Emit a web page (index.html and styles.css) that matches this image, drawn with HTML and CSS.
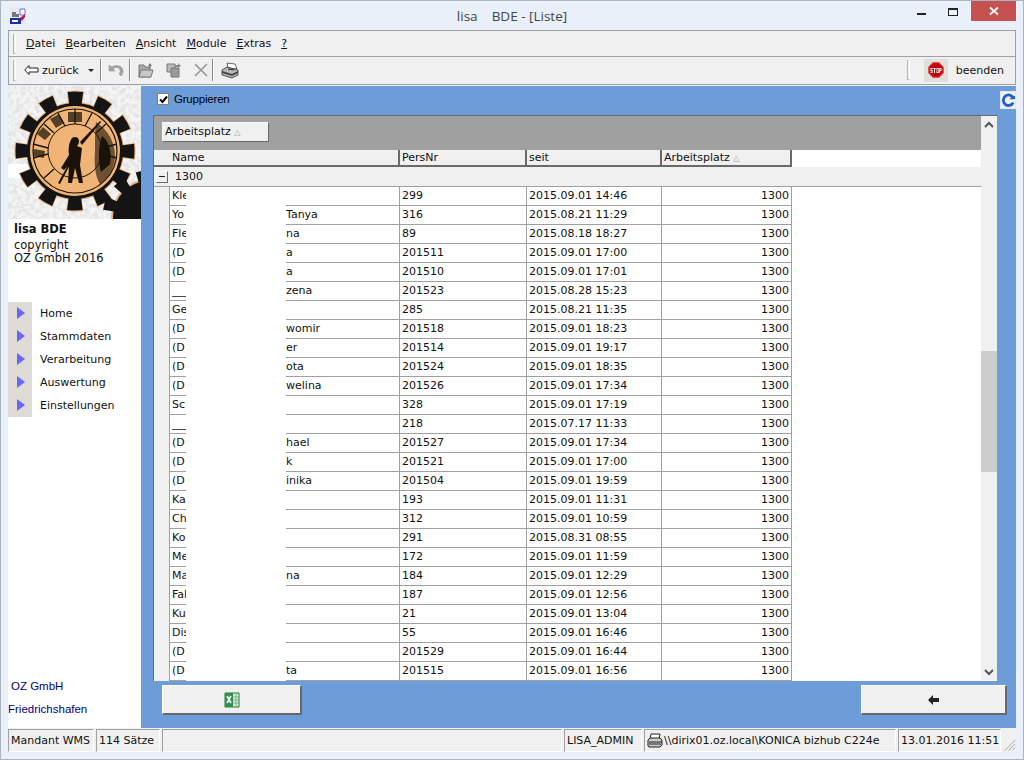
FILE: index.html
```html
<!DOCTYPE html>
<html lang="de">
<head>
<meta charset="utf-8">
<title>lisa BDE - [Liste]</title>
<link rel="stylesheet" href="styles.css">
</head>
<body>
<div class="window">
  <header class="titlebar">
    <svg class="appicon" width="16" height="16" viewBox="0 0 16 16"><rect width="16" height="16" fill="#e8e8f4"/><rect x="0" y="10" width="11" height="6" fill="#1c2f9c"/><path d="M2 4h4v5H2zM6 6h3v3H6z" fill="#777"/><path d="M10 1h5v6h-5z" fill="#f4f4ff" stroke="#3a4fb5" stroke-width=".7"/><path d="M10 10l5-4v3l-3 4z" fill="#b5174a"/><rect x="2" y="12" width="6" height="2" fill="#fff"/></svg>
    <div class="title">lisa    BDE - [Liste]</div>
    <div class="winbtns">
      <span class="min"></span>
      <span class="max"></span>
      <span class="close"><svg width="10" height="10" viewBox="0 0 10 10"><path d="M1 1.5l8 7M9 1.5l-8 7" stroke="#fff" stroke-width="1.8"/></svg></span>
    </div>
  </header>

  <div class="bars">
    <nav class="menubar">
      <span class="grip"></span>
      <span><u>D</u>atei</span><span><u>B</u>earbeiten</span><span><u>A</u>nsicht</span><span><u>M</u>odule</span><span><u>E</u>xtras</span><span><u>?</u></span>
    </nav>
    <div class="toolbar">
      <span class="grip"></span>
      <span class="back">
        <svg width="15" height="10" viewBox="0 0 15 10"><path d="M5 .5v2.5h9v4H5v2.5L.8 5z" fill="#fff" stroke="#222"/></svg>
        zurück
        <svg class="caret" width="6" height="3" viewBox="0 0 6 3"><path d="M0 0h6L3 3z" fill="#222"/></svg>
      </span>
      <span class="sep"></span>
      <svg class="tool undo" width="16" height="14" viewBox="0 0 16 14"><path d="M1 2v6h6L5 6c2-2 6-2 7 1 .5 1.5 0 3-1 4l2 2c2-2 3-5 1-8-2.500-3-7-3-10-1z" fill="#a4a4a4" stroke="#888" stroke-width=".5"/></svg>
      <span class="sep"></span>
      <svg class="tool" width="17" height="16" viewBox="0 0 17 16"><path d="M1 3h5l1 2h5v10H1z" fill="#a8a8a8" stroke="#777"/><path d="M3 8h12l-2 7H1z" fill="#c8c8c8" stroke="#777"/><path d="M10 4l2-3 2 3h-1.500v2h-1V4z" fill="#777"/></svg>
      <svg class="tool" width="17" height="16" viewBox="0 0 17 16"><path d="M1 2h8v8H1z" fill="#bbb" stroke="#777"/><path d="M5 6h8v9H5z" fill="#999" stroke="#777"/><path d="M12 1l3 3-3 2V5H9V3h3z" fill="#888"/></svg>
      <svg class="tool" width="14" height="14" viewBox="0 0 14 14"><path d="M1 1l12 12M13 1L1 13" stroke="#999" stroke-width="1.700"/></svg>
      <span class="sep"></span>
      <svg class="tool printer" width="18" height="17" viewBox="0 0 18 17"><path d="M6 1l8 1 2 5-9-1z" fill="#fff" stroke="#444" stroke-width=".8"/><path d="M1 8l5-3 11 3v5l-6 3-10-3z" fill="#b8b8b8" stroke="#333" stroke-width=".8"/><path d="M1 9l10 3 6-3v2l-6 3-10-3z" fill="#444"/><path d="M7 7l6 1" stroke="#222"/></svg>
      <span class="spacer"></span>
      <span class="grip endgrip"></span>
      <span class="stopbox"><svg width="16" height="16" viewBox="0 0 16 16"><path d="M5 .3h6L15.700 5v6L11 15.700H5L.3 11V5z" fill="#c4000c"/><path d="M5 .8h6L15.200 5v6L11 15.200H5L.8 11V5z" fill="none" stroke="#e88" stroke-width=".5"/><path d="M2.500 6h2v1h-1v1h1v3h-2v-1h1V9h-1zM5.200 6h2.600v1h-.8v4H6V7h-.8zM8.500 6h2.200v5H8.500zM9.200 7v3h.8V7zM11.300 6h2.200v3h-1.400v2h-.8zM12.100 7v1h.7V7z" fill="#fff"/></svg></span>
      <span class="quit">beenden</span>
    </div>
  </div>

  <div class="body">
    <aside class="sidebar">
      <svg class="logo" width="133" height="133" viewBox="0 0 133 133">
        <defs>
          <filter id="noise" x="0" y="0" width="100%" height="100%">
            <feTurbulence type="fractalNoise" baseFrequency="0.22" numOctaves="3" seed="4"/>
            <feColorMatrix values="0 0 0 0 .78  0 0 0 0 .78  0 0 0 0 .78  3 3 0 0 -2.600"/>
          </filter>
        </defs>
        <rect width="133" height="133" fill="#f4f4f4"/>
        <rect width="133" height="133" filter="url(#noise)"/>
        <rect x="0" y="78" width="20" height="14" fill="#fff"/>
        <circle cx="67" cy="65" r="49" fill="#e9b27a"/>
        <circle cx="67" cy="65" r="54" fill="none" stroke="#e9b27a" stroke-width="13" stroke-dasharray="15.500 12.770" stroke-dashoffset="7.700"/>
        <circle cx="67" cy="65" r="53" fill="none" stroke="#141414" stroke-width="13" stroke-dasharray="14 13.750" stroke-dashoffset="7"/>
        <circle cx="67" cy="65" r="48" fill="#141414"/>
        <circle cx="141" cy="131" r="38" fill="#e9b27a"/>
        <circle cx="141" cy="131" r="36" fill="#141414"/>
        <circle cx="141" cy="131" r="41" fill="none" stroke="#141414" stroke-width="11" stroke-dasharray="12 11" stroke-dashoffset="3"/>
        <circle cx="67" cy="65" r="45" fill="#f0b576"/>
        <circle cx="67" cy="65" r="42" fill="none" stroke="#1a1208" stroke-width="1.200"/>
        <circle cx="67" cy="65" r="27" fill="none" stroke="#1a1208" stroke-width="1"/>
        <g stroke="#1a1208" stroke-width="1.300">
          <path d="M67 23V38M84 27L77 40M98 38L88 47M50 27L57 40M36 38L46 47M25 58L40 62M25 72L40 68M36 92L46 83M109 58L94 62M109 72L94 68"/>
        </g>
        <g fill="#1a1208">
          <path d="M60 26h14v10H60zM42 33l9-5 5 9-8 5zM29 48l6-7 8 7-6 6zM26 63l11 2-1 7-11-2z" opacity=".72"/>
          <path d="M88 36c12 8 19 20 19 34 0 12-7 22-15 28-5-8-6-20-5-34 0-10 0-20 1-28z" opacity=".62"/>
          <path d="M94 50c7 5 10 16 8 28l-9 8c-3-10-3-26 1-36z"/>
          <path d="M64 52c3-2 7-1 7 3 0 2-1 4-2 5l5 2-2 17 3 18h-4l-4-15-3 15h-4l1-18-5 5-3-2 8-13c-1-6 0-13 3-17z"/>
          <path d="M72 56L92 35l1 1-19 23zM50 97L64 72l1 1-13 25z"/>
        </g>
      </svg>
      <div class="about">
        <strong>lisa BDE</strong>
        <span>copyright</span>
        <span>OZ GmbH 2016</span>
      </div>
      <ul class="nav">
        <li><i></i>Home</li>
        <li><i></i>Stammdaten</li>
        <li><i></i>Verarbeitung</li>
        <li><i></i>Auswertung</li>
        <li><i></i>Einstellungen</li>
      </ul>
      <div class="foot">
        <div class="foot1">OZ GmbH</div>
        <div class="foot2">Friedrichshafen</div>
      </div>
    </aside>

    <main class="main">
      <div class="topline">
        <label class="check"><span class="box"><svg width="9" height="9" viewBox="0 0 9 9"><path d="M1 4.500l2.500 2.500L8 1.500" fill="none" stroke="#000" stroke-width="2"/></svg></span>Gruppieren</label>
        <span class="refresh"><svg width="16" height="16" viewBox="0 0 16 16"><path d="M14 5.500A6 6 0 1 0 14 11" fill="none" stroke="#1f5fc4" stroke-width="3.200"/><path d="M9 7h7V3z" fill="#1f5fc4"/></svg></span>
      </div>

      <section class="grid">
        <div class="gridbody">
          <div class="groupbar"><span class="chip">Arbeitsplatz <em>△</em></span></div>
          <div class="row head">
            <div class="c0"></div><div class="c1">Name</div><div class="c2">PersNr</div><div class="c3">seit</div><div class="c4">Arbeitsplatz <em>△</em></div>
          </div>
          <div class="group"><span class="minus"></span>1300</div>
          <div class="rows">
            <div class="row"><div class="c0"></div><div class="c1"><b>Kle</b></div><div class="c2">299</div><div class="c3">2015.09.01 14:46</div><div class="c4">1300</div></div>
            <div class="row"><div class="c0"></div><div class="c1"><b>Yo</b>Tanya</div><div class="c2">316</div><div class="c3">2015.08.21 11:29</div><div class="c4">1300</div></div>
            <div class="row"><div class="c0"></div><div class="c1"><b>Fle</b>na</div><div class="c2">89</div><div class="c3">2015.08.18 18:27</div><div class="c4">1300</div></div>
            <div class="row"><div class="c0"></div><div class="c1"><b>(D</b>a</div><div class="c2">201511</div><div class="c3">2015.09.01 17:00</div><div class="c4">1300</div></div>
            <div class="row"><div class="c0"></div><div class="c1"><b>(D</b>a</div><div class="c2">201510</div><div class="c3">2015.09.01 17:01</div><div class="c4">1300</div></div>
            <div class="row"><div class="c0"></div><div class="c1"><b>___</b>zena</div><div class="c2">201523</div><div class="c3">2015.08.28 15:23</div><div class="c4">1300</div></div>
            <div class="row"><div class="c0"></div><div class="c1"><b>Ge</b></div><div class="c2">285</div><div class="c3">2015.08.21 11:35</div><div class="c4">1300</div></div>
            <div class="row"><div class="c0"></div><div class="c1"><b>(D</b>womir</div><div class="c2">201518</div><div class="c3">2015.09.01 18:23</div><div class="c4">1300</div></div>
            <div class="row"><div class="c0"></div><div class="c1"><b>(D</b>er</div><div class="c2">201514</div><div class="c3">2015.09.01 19:17</div><div class="c4">1300</div></div>
            <div class="row"><div class="c0"></div><div class="c1"><b>(D</b>ota</div><div class="c2">201524</div><div class="c3">2015.09.01 18:35</div><div class="c4">1300</div></div>
            <div class="row"><div class="c0"></div><div class="c1"><b>(D</b>welina</div><div class="c2">201526</div><div class="c3">2015.09.01 17:34</div><div class="c4">1300</div></div>
            <div class="row"><div class="c0"></div><div class="c1"><b>Sc</b></div><div class="c2">328</div><div class="c3">2015.09.01 17:19</div><div class="c4">1300</div></div>
            <div class="row"><div class="c0"></div><div class="c1"><b>___</b></div><div class="c2">218</div><div class="c3">2015.07.17 11:33</div><div class="c4">1300</div></div>
            <div class="row"><div class="c0"></div><div class="c1"><b>(D</b>hael</div><div class="c2">201527</div><div class="c3">2015.09.01 17:34</div><div class="c4">1300</div></div>
            <div class="row"><div class="c0"></div><div class="c1"><b>(D</b>k</div><div class="c2">201521</div><div class="c3">2015.09.01 17:00</div><div class="c4">1300</div></div>
            <div class="row"><div class="c0"></div><div class="c1"><b>(D</b>inika</div><div class="c2">201504</div><div class="c3">2015.09.01 19:59</div><div class="c4">1300</div></div>
            <div class="row"><div class="c0"></div><div class="c1"><b>Ka</b></div><div class="c2">193</div><div class="c3">2015.09.01 11:31</div><div class="c4">1300</div></div>
            <div class="row"><div class="c0"></div><div class="c1"><b>Ch</b></div><div class="c2">312</div><div class="c3">2015.09.01 10:59</div><div class="c4">1300</div></div>
            <div class="row"><div class="c0"></div><div class="c1"><b>Ko</b></div><div class="c2">291</div><div class="c3">2015.08.31 08:55</div><div class="c4">1300</div></div>
            <div class="row"><div class="c0"></div><div class="c1"><b>Me</b></div><div class="c2">172</div><div class="c3">2015.09.01 11:59</div><div class="c4">1300</div></div>
            <div class="row"><div class="c0"></div><div class="c1"><b>Ma</b>na</div><div class="c2">184</div><div class="c3">2015.09.01 12:29</div><div class="c4">1300</div></div>
            <div class="row"><div class="c0"></div><div class="c1"><b>Fal</b></div><div class="c2">187</div><div class="c3">2015.09.01 12:56</div><div class="c4">1300</div></div>
            <div class="row"><div class="c0"></div><div class="c1"><b>Ku</b></div><div class="c2">21</div><div class="c3">2015.09.01 13:04</div><div class="c4">1300</div></div>
            <div class="row"><div class="c0"></div><div class="c1"><b>Dis</b></div><div class="c2">55</div><div class="c3">2015.09.01 16:46</div><div class="c4">1300</div></div>
            <div class="row"><div class="c0"></div><div class="c1"><b>(D</b></div><div class="c2">201529</div><div class="c3">2015.09.01 16:44</div><div class="c4">1300</div></div>
            <div class="row"><div class="c0"></div><div class="c1"><b>(D</b>ta</div><div class="c2">201515</div><div class="c3">2015.09.01 16:56</div><div class="c4">1300</div></div>
            <div class="mask"></div>
          </div>
        </div>
        <div class="scrollbar">
          <svg width="16" height="16" viewBox="0 0 16 16"><path d="M4 10l4-4 4 4" fill="none" stroke="#555" stroke-width="2"/></svg>
          <div class="track"><div class="thumb"></div></div>
          <svg width="16" height="16" viewBox="0 0 16 16"><path d="M4 6l4 4 4-4" fill="none" stroke="#555" stroke-width="2"/></svg>
        </div>
      </section>

      <div class="actions">
        <button class="btn excel" type="button"><svg width="16" height="16" viewBox="0 0 16 16"><path d="M1 1h14v14H1z" fill="#d9ecd9" stroke="#1f7a3a"/><path d="M1 1h8v14H1z" fill="#2f8f4c"/><path d="M3 4l4 7M7 4l-4 7" stroke="#fff" stroke-width="1.600"/><path d="M9 5h6M9 8h6M9 11h6M12 1v14" stroke="#5aa870" stroke-width=".7"/></svg></button>
        <button class="btn arrow" type="button"><svg width="12" height="10" viewBox="0 0 12 10"><path d="M5 0v3h6v4H5v3L0 5z" fill="#222"/></svg></button>
      </div>
    </main>
  </div>

  <footer class="status">
    <span class="pane p1">Mandant WMS</span>
    <span class="pane p2">114 Sätze</span>
    <span class="pane p3"></span>
    <span class="pane p4">LISA_ADMIN</span>
    <span class="pane p5"><svg width="16" height="15" viewBox="0 0 16 15"><path d="M4 1h9l-1 5H3z" fill="#fff" stroke="#222"/><path d="M1 7l2-2h10l2 2v5l-2 2H2l-1-1z" fill="#ccc" stroke="#222"/><path d="M2 9h13M2 11h12" stroke="#222"/></svg>\\dirix01.oz.local\KONICA bizhub C224e</span>
    <span class="pane p6">13.01.2016 11:51</span>
    <svg class="sizegrip" width="14" height="14" viewBox="0 0 14 14"><path d="M13 2L2 13M13 6L6 13M13 10l-3 3" stroke="#a0a0a0" stroke-width="1"/></svg>
  </footer>
</div>
</body>
</html>
```
FILE: styles.css
```css
* { box-sizing: border-box; }
html, body { margin: 0; padding: 0; }
body { width: 1024px; height: 760px; overflow: hidden; font-family: "DejaVu Sans", Verdana, sans-serif; font-size: 11px; color: #111; }

.window { width: 1024px; height: 760px; background: #e9f0fa; border: 1px solid #a9b4c2; padding: 0 7px 7px; display: flex; flex-direction: column; }

.titlebar { height: 29px; flex: none; display: flex; align-items: flex-start; position: relative; }
.appicon { margin: 7px 0 0 2px; }
.title { position: absolute; left: 0; right: 0; top: 6px; text-align: center; white-space: pre; font-family: "Open Sans", sans-serif; font-size: 13.5px; color: #444; line-height: 18px; }
.winbtns { position: absolute; right: 0; top: 0; display: flex; }
.min { width: 9px; height: 2px; background: #222; margin: 12px 0 0 0; }
.max { width: 10px; height: 8px; border: 1px solid #222; border-top-width: 2px; margin: 7px 0 0 22px; }
.close { width: 45px; height: 20px; background: #c75050; margin: 0 0 0 13px; display: flex; align-items: center; justify-content: center; }

.bars { flex: none; height: 55px; background: #f0f0f0; border: 1px solid #a0a0a0; border-width: 1px 1px 1px 1px; }
.menubar { height: 26px; display: flex; align-items: center; gap: 10px; border-bottom: 1px solid #a0a0a0; padding-left: 4px; }
.menubar .grip { margin-right: 0; height: 20px; }
.grip { width: 3px; height: 21px; border-left: 1px solid #b5b5b5; border-bottom: 1px solid #b5b5b5; border-right: 1px solid #fff; flex: none; }
.toolbar { height: 26px; display: flex; align-items: center; padding-left: 4px; }
.back { display: flex; align-items: center; gap: 3px; margin-left: 8px; width: 76px; }
.caret { margin-left: 6px; }
.sep { width: 2px; height: 22px; background: #8a8a8a; border-right: 1px solid #fff; flex: none; }
.tool { margin: 0 4px 0 7px; flex: none; }
.undo { margin: 0 5px 0 6px; }
.printer { margin-left: 7px; }
.spacer { flex: 1; }
.endgrip { margin-right: 14px; height: 20px; }
.stopbox { width: 24px; height: 23px; background: #e1dfda; display: flex; align-items: center; justify-content: center; }
.quit { margin: 0 11px 0 8px; }

.body { flex: 1; min-height: 0; display: flex; margin-top: 1px; }

.sidebar { width: 133px; flex: none; background: #fff; display: flex; flex-direction: column; }
.logo { display: block; flex: none; }
.about { display: flex; flex-direction: column; padding: 4px 0 0 6px; line-height: 13px; font-size: 11.500px; }
.about strong { margin-bottom: 3px; }
.nav { list-style: none; margin: 37px 0 0; padding: 0; }
.nav li { height: 23px; display: flex; align-items: center; gap: 8px; }
.nav i { display: block; width: 24px; height: 23px; background: #dedbd6 linear-gradient(#6a66f5, #6a66f5) no-repeat; background-size: 0 0; position: relative; }
.nav i::after { content: ""; position: absolute; left: 9px; top: 5px; border-left: 8px solid #6a66f5; border-top: 6px solid transparent; border-bottom: 6px solid transparent; }
.foot { margin-top: auto; color: #000080; font-family: "Liberation Sans", sans-serif; font-size: 11.500px; padding-bottom: 12px; }
.foot1 { padding-left: 3px; height: 23px; line-height: 14px; }
.foot2 { line-height: 14px; }

.main { flex: 1; min-width: 0; background: #6d9dd8; padding-left: 12px; display: flex; flex-direction: column; }
.topline { height: 29px; flex: none; display: flex; justify-content: space-between; align-items: flex-start; }
.check { display: flex; align-items: center; gap: 5px; margin: 7px 0 0 4px; font-family: "Liberation Sans", sans-serif; font-size: 11.500px; letter-spacing: -.2px; color: #000; }
.box { width: 12px; height: 12px; background: #fff; border: 1px solid #808080; display: flex; align-items: center; justify-content: center; }
.refresh { width: 16px; height: 18px; background: #f0f0f0; margin-top: 5px; display: flex; align-items: center; justify-content: flex-start; border: 1px solid #e0e8f0; overflow: hidden; }

.grid { width: 844px; height: 566px; flex: none; display: flex; background: #fff; border-top: 1px solid #696969; border-left: 1px solid #696969; }
.gridbody { flex: 1; min-width: 0; background: #fff; }
.groupbar { height: 34px; background: #a0a0a0; padding: 6px 0 0 8px; }
.chip { display: block; width: 107px; height: 20px; line-height: 18px; background: #f0f0f0; border: 1px solid #f8f8f8; border-right-color: #696969; border-bottom-color: #696969; padding-left: 2px; }
em { font-style: normal; font-size: 8px; color: #aaa; }
.row { display: grid; grid-template-columns: 16px 230px 127px 135px 130px; height: 19px; line-height: 18px; }
.row > div { border-right: 1px solid #a0a0a0; border-bottom: 1px solid #a0a0a0; padding-left: 2px; white-space: nowrap; overflow: hidden; background: #fff; }
.row > .c0 { background: #f0f0f0; border-bottom: 0; padding: 0; }
.row > .c4 { text-align: right; padding-right: 2px; }
.c1 { display: flex; }
.c1 b { font-weight: 400; width: 114px; flex: none; overflow: hidden; }
.row.head { height: 17px; line-height: 16px; }
.row.head > div { background: #f0f0f0; border-right: 2px solid #696969; border-bottom: 2px solid #696969; }
.row.head > .c0 { border-right: 0; }
.row.head > .c4 { text-align: left; }
.group { height: 20px; background: #f0f0f0; display: flex; align-items: center; gap: 7px; padding-left: 2px; line-height: 18px; border-bottom: 1px solid #a0a0a0; }
.minus { width: 12px; height: 12px; background: #f0f0f0 linear-gradient(#222, #222) center no-repeat; background-size: 6px 1px; border: 1px solid #fff; border-right-color: #696969; border-bottom-color: #696969; flex: none; }
.rows { position: relative; }
.mask { position: absolute; left: 32px; top: 0; bottom: 0; width: 100px; background: #fff; }

.scrollbar { width: 16px; flex: none; background: #f0f0f0; display: flex; flex-direction: column; border-bottom: 1px solid #fff; }
.scrollbar svg { flex: none; margin-top: 1px; }
.track { flex: 1; position: relative; }
.thumb { position: absolute; left: 0; right: 0; top: 218px; height: 121px; background: #cdcdcd; }

.actions { flex: 1; display: flex; justify-content: space-between; align-items: flex-start; padding: 4px 9px 0 9px; }
.btn { height: 30px; background: #f0f0f0; border: 1px solid #fff; border-right: 2px solid #696969; border-bottom: 2px solid #696969; padding: 0; display: flex; align-items: center; justify-content: center; }
.excel { width: 140px; }
.arrow { width: 146px; }

.status { flex: none; height: 24px; display: flex; align-items: stretch; padding-top: 1px; background: #f0f0f0; gap: 2px; }
.pane { border: 1px solid #a0a0a0; border-right-color: #fff; border-bottom-color: #fff; line-height: 22px; white-space: nowrap; display: flex; align-items: center; padding-left: 2px; flex: none; }
.p1 { width: 86px; }
.p2 { width: 64px; }
.p3 { width: 400px; }
.p4 { width: 78px; }
.p5 { width: 252px; gap: 1px; }
.p6 { width: 103px; }
.sizegrip { align-self: flex-end; margin-left: auto; }
```
